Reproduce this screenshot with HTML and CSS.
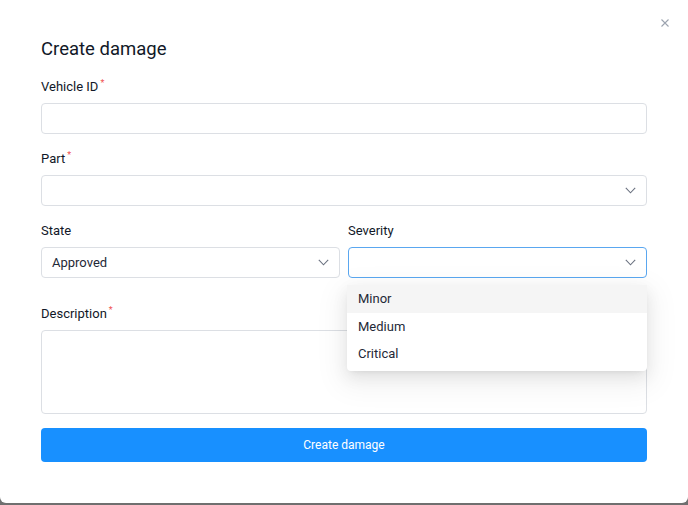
FILE: index.html
```html
<!DOCTYPE html>
<html>
<head>
<meta charset="utf-8">
<link rel="stylesheet" href="styles.css">
</head>
<body>
<div class="modal">
  <button class="close" aria-label="Close">
    <svg width="8" height="8" viewBox="0 0 8 8"><path d="M0.5 0.5L7.5 7.5M7.5 0.5L0.5 7.5" stroke="#9ca3af" stroke-width="1.1" fill="none"/></svg>
  </button>
  <h1 class="title">Create damage</h1>
  <form class="form">
    <div class="item">
      <label class="label">Vehicle ID<span class="req">*</span></label>
      <div class="input"></div>
    </div>
    <div class="item">
      <label class="label">Part<span class="req">*</span></label>
      <div class="input select"><span class="value"></span>
        <svg class="chev" width="11" height="7" viewBox="0 0 11 7"><path d="M0.8 0.8L5.5 5.8L10.2 0.8" stroke="#6b7280" stroke-width="1.1" fill="none"/></svg>
      </div>
    </div>
    <div class="row">
      <div class="item">
        <label class="label">State</label>
        <div class="input select"><span class="value">Approved</span>
          <svg class="chev" width="11" height="7" viewBox="0 0 11 7"><path d="M0.8 0.8L5.5 5.8L10.2 0.8" stroke="#6b7280" stroke-width="1.1" fill="none"/></svg>
        </div>
      </div>
      <div class="item drop-wrap">
        <label class="label">Severity</label>
        <div class="input select focus"><span class="value"></span>
          <svg class="chev" width="11" height="7" viewBox="0 0 11 7"><path d="M0.8 0.8L5.5 5.8L10.2 0.8" stroke="#6b7280" stroke-width="1.1" fill="none"/></svg>
        </div>
        <ul class="dropdown">
          <li class="opt active">Minor</li>
          <li class="opt">Medium</li>
          <li class="opt">Critical</li>
        </ul>
      </div>
    </div>
    <div class="item desc">
      <label class="label">Description<span class="req">*</span></label>
      <div class="input textarea"></div>
    </div>
    <button type="button" class="submit">Create damage</button>
  </form>
</div>
</body>
</html>
```
FILE: styles.css
```css
* { box-sizing: border-box; }
html, body { margin: 0; padding: 0; }
body {
  width: 688px;
  height: 505px;
  background: #6f6f6f;
  font-family: Roboto, Inter, "Noto Sans", sans-serif;
  overflow: hidden;
}
.modal {
  position: relative;
  height: 503px;
  background: #fff;
  border-radius: 0 0 6px 6px;
  padding: 37px 41px 0 41px;
}
.close {
  position: absolute;
  top: 19px;
  right: 19px;
  width: 8px;
  height: 8px;
  padding: 0;
  border: 0;
  background: none;
  display: flex;
}
.title {
  margin: 0 0 14px 0;
  font-size: 18.5px;
  font-weight: 400;
  line-height: 24px;
  color: #111827;
}
.form { display: flex; flex-direction: column; }
.item { display: flex; flex-direction: column; margin-bottom: 13px; }
.label {
  font-size: 13px;
  line-height: 24px;
  height: 23px;
  color: #111827;
  font-weight: 400;
  margin-bottom: 5px;
}
.req {
  color: #f05252;
  font-size: 9px;
  vertical-align: top;
  line-height: 16px;
  margin-left: 2px;
}
.input {
  height: 31px;
  border: 1px solid #dcdfe4;
  border-radius: 4px;
  background: #fff;
}
.select {
  display: flex;
  align-items: center;
  justify-content: space-between;
  padding: 0 10px 0 10px;
}
.select .value { font-size: 13px; color: #1f2937; }
.chev { display: block; }
.focus { border-color: #5aa7f0; }
.row { display: grid; grid-template-columns: 1fr 1fr; gap: 8px; margin-bottom: 11px; }
.drop-wrap { position: relative; }
.dropdown {
  position: absolute;
  top: 66px;
  left: -1px;
  right: 0;
  margin: 0;
  padding: 0;
  list-style: none;
  background: #fff;
  border-radius: 4px;
  box-shadow: 0 6px 16px rgba(0,0,0,0.08), 0 3px 6px -4px rgba(0,0,0,0.12), 0 9px 28px 8px rgba(0,0,0,0.05);
  z-index: 2;
  padding-bottom: 3px;
}
.opt {
  height: 27.5px;
  line-height: 27px;
  padding: 0 11px;
  font-size: 13px;
  color: #1f2937;
}
.opt.active { background: #f5f5f5; }
.desc { margin-bottom: 14px; }
.textarea { height: 84px; }
.submit {
  height: 34px;
  border: 0;
  border-radius: 4px;
  background: #1890ff;
  color: #fff;
  font-family: Roboto, Inter, "Noto Sans", sans-serif;
  font-size: 12px;
  padding: 0;
}
```
